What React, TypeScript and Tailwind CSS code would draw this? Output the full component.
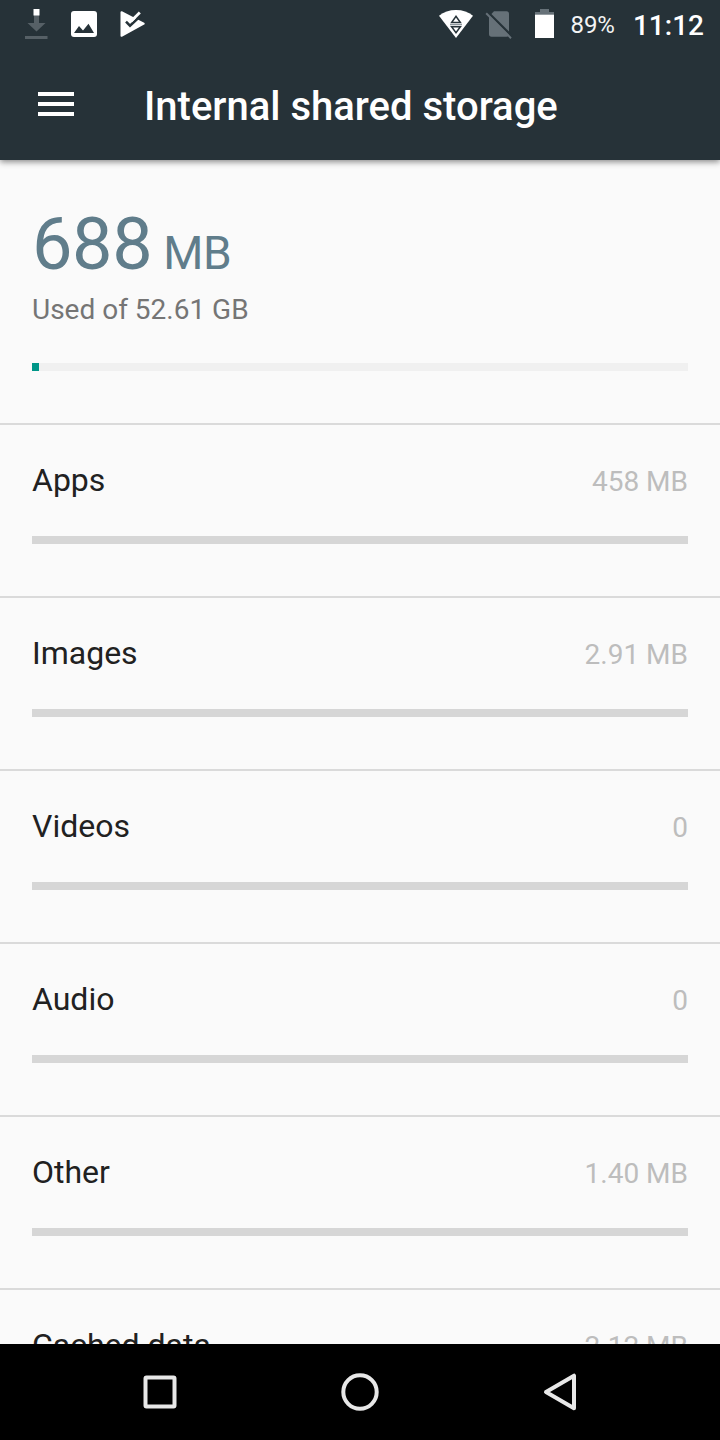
interface StorageCategory {
  name: string;
  size: string;
}

const categories: StorageCategory[] = [
  { name: 'Apps', size: '458 MB' },
  { name: 'Images', size: '2.91 MB' },
  { name: 'Videos', size: '0' },
  { name: 'Audio', size: '0' },
  { name: 'Other', size: '1.40 MB' },
  { name: 'Cached data', size: '2.12 MB' },
];

function StatusBar() {
  return (
    <div className="flex h-12 shrink-0 items-center justify-between pl-6 pr-4">
      <div className="flex items-center">
        {/* Download in progress */}
        <svg className="h-12 w-6" viewBox="0 0 24 48">
          <path d="M10 15h5v8h6.5L12.5 31.5 3.5 23H10z" fill="#566066" />
          <path d="M9.5 9h6v6.5h-6z" fill="#fff" />
          <path d="M1 36h22.5v3H1z" fill="#566066" />
        </svg>
        {/* Screenshot saved */}
        <svg className="ml-[22px] h-12 w-7" viewBox="0 0 28 48">
          <rect x="1" y="11" width="26" height="26" rx="3" fill="#fff" />
          <path d="M4 33l5-7 4 4.5 5.5-6.8L24 33z" fill="#263238" />
        </svg>
        <svg className="ml-5 h-12 w-7" viewBox="0 0 28 48">
          <path d="M3.5 12.2L25.7 23.7 3.5 35.8z" fill="#fff" stroke="#fff" strokeWidth="2" strokeLinejoin="round" />
          <path d="M8 21.7l4 4L24 14.5" fill="none" stroke="#263238" strokeWidth="2.5" />
          <path d="M13 21.2l8.8-8.8" fill="none" stroke="#fff" strokeWidth="2.8" />
        </svg>
      </div>
      <div className="flex items-center text-white">
        <svg className="h-12 w-9" viewBox="438 0 36 48">
          <path d="M456 38L439 15.8Q446 10 456 10t17 5.8z" fill="#fff" />
          <path d="M451.6 22.6h8.8L456 16.4zM451.6 26.8h8.8L456 32.7z" fill="#fff" stroke="#263238" strokeWidth="1.5" />
          <path d="M450 24.7h12" stroke="#78838a" strokeWidth="1.1" />
        </svg>
        {/* No SIM */}
        <svg className="ml-[11px] h-12 w-7" viewBox="485 0 28 48">
          <path d="M489 16.5l5-5.3h12.5q2.5 0 2.5 2.5V34q0 2.8-2.5 2.8h-15q-2.5 0-2.5-2.8z" fill="#667178" />
          <path d="M488 12.3l24 24" stroke="#263238" strokeWidth="2.4" />
          <path d="M486.2 13.2l24.8 25" stroke="#667178" strokeWidth="2" />
        </svg>
        <svg className="ml-[21px] h-12 w-5" viewBox="534 0 20 48">
          <path d="M540 9h9v3h5.3v3H535v-3h5z" fill="#667178" />
          <path d="M535 14.7h19.3V38H535z" fill="#fff" />
        </svg>
        <span className="ml-4 pt-0.5 text-2xl leading-[48px] text-[#f3f4f4]">89%</span>
        <span className="ml-[18px] pt-1 text-[28px] font-medium leading-[50px]">11:12</span>
      </div>
    </div>
  );
}

function AppBar() {
  return (
    <header className="relative z-10 flex h-40 shrink-0 flex-col bg-[#263238] shadow-[0_2px_6px_rgba(0,0,0,0.45)]">
      <StatusBar />
      <div className="flex h-28 items-center pl-[38px]">
        <button className="flex w-9 flex-col gap-1.5" aria-label="Menu">
          <span className="h-1 bg-white" />
          <span className="h-1 bg-white" />
          <span className="h-1 bg-white" />
        </button>
        <h1 className="ml-[70px] pt-1.5 text-[40px] font-medium leading-[48px] text-white">Internal shared storage</h1>
      </div>
    </header>
  );
}

function StorageSummary() {
  return (
    <section className="h-[263px] shrink-0 px-8 pt-[45px] text-[#607d8b]">
      <div className="flex h-20 items-baseline whitespace-pre text-[72px] leading-[80px] tracking-[-0.4px]">
        688<span className="text-[46px] leading-none"> MB</span>
      </div>
      <p className="mt-[5px] text-[28px] leading-10 text-[#757575]">Used of 52.61 GB</p>
      <div className="mt-[33px] h-2 bg-[#f0f0f0]">
        <div className="h-full w-[7px] bg-[#009688]" />
      </div>
    </section>
  );
}

function CategoryRow({ name, size }: StorageCategory) {
  return (
    <li className="h-[173px] shrink-0 border-t-2 border-[#dadada] px-8 pt-[35px]">
      <div className="flex h-10 justify-between">
        <span className="text-[32px] leading-10 text-[#212121]">{name}</span>
        <span className="text-[28px] leading-11 text-[#bdbdbd]">{size}</span>
      </div>
      <div className="mt-9 h-2 bg-[#d6d6d6]" />
    </li>
  );
}

function NavigationBar() {
  return (
    <nav className="flex h-24 shrink-0 items-center justify-center gap-[152px] bg-black">
      <svg className="size-12" viewBox="0 0 48 48" fill="none" stroke="#e8e8e8" strokeWidth="4">
        <rect x="9.5" y="9.5" width="29" height="29" rx="1" />
      </svg>
      <svg className="size-12" viewBox="0 0 48 48" fill="none" stroke="#e8e8e8" strokeWidth="4">
        <circle cx="24" cy="24" r="16.7" />
      </svg>
      <svg className="size-12" viewBox="0 0 48 48" fill="none" stroke="#e8e8e8" strokeWidth="4" strokeLinejoin="round">
        <path d="M10 24L38 7.7v32.6z" />
      </svg>
    </nav>
  );
}

export default function App() {
  return (
    <div className="flex h-[1440px] w-[720px] flex-col overflow-hidden bg-[#fafafa] font-[Roboto,sans-serif]">
      <AppBar />
      <main className="flex min-h-0 flex-1 flex-col overflow-hidden">
        <StorageSummary />
        <ul className="flex flex-col">
          {categories.map((category) => (
            <CategoryRow key={category.name} {...category} />
          ))}
        </ul>
      </main>
      <NavigationBar />
    </div>
  );
}
